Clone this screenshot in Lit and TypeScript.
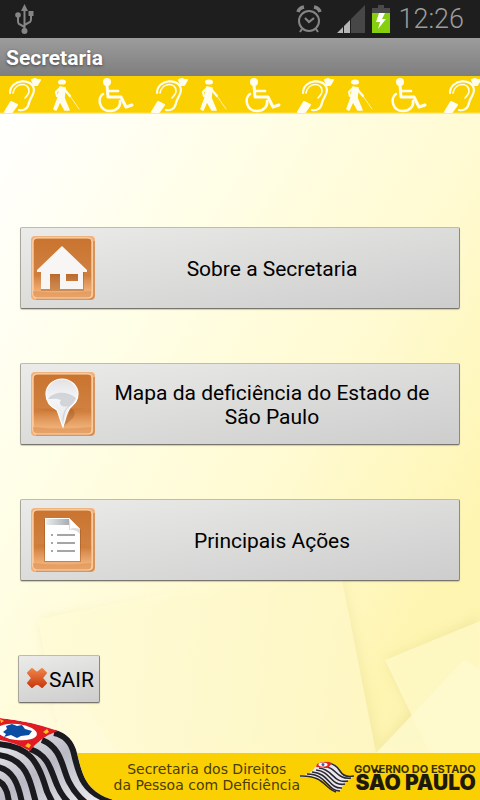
import { LitElement, html, svg, css } from "lit";
import { customElement } from "lit/decorators.js";

const tile = svg`
  <linearGradient id="tile" x1="0" y1="0" x2="0" y2="1">
    <stop offset="0" stop-color="#c9742f"/>
    <stop offset=".56" stop-color="#d08040"/>
    <stop offset=".62" stop-color="#c9722d"/>
    <stop offset="1" stop-color="#e89a58"/>
  </linearGradient>
  <linearGradient id="gloss" x1="0" y1="0" x2="0" y2="1">
    <stop offset="0" stop-color="#ffd2a4" stop-opacity=".05"/>
    <stop offset="1" stop-color="#ffd2a4" stop-opacity=".6"/>
  </linearGradient>
  <linearGradient id="pin" x1="0" y1="0" x2="0" y2="1">
    <stop offset="0" stop-color="#e2e2e4"/>
    <stop offset=".4" stop-color="#f6f6f8"/>
    <stop offset="1" stop-color="#e4e5e8"/>
  </linearGradient>
  <rect width="64" height="64" rx="4" fill="#f2b27c"/>
  <path d="M63 5V59Q63 63 59 63H5" fill="none" stroke="#d08a50" stroke-width="1.5"/>
  <rect x="2" y="2" width="59" height="60" rx="4" fill="url(#tile)" stroke="#ffdcb8" stroke-width="1.2"/>
  <path d="M2 37Q30 42 60 36V58Q60 61 57 61H5Q2 61 2 58Z" fill="url(#gloss)"/>
  <path d="M2 55Q30 58 60 55V58Q60 61 57 61H5Q2 61 2 58Z" fill="#d98a4a" opacity=".5"/>`;

const house = svg`${tile}
  <path d="M31 12L57 36H53V55H10V36H6Z" fill="#97501a" opacity=".35"/>
  <path fill-rule="evenodd" fill="#f7f6f4" d="M31 10L56 34V36H52V53H29V38H19V53H10V36H6V34ZM35 38V45H47V38Z"/>`;

const pin = svg`${tile}
  <path d="M31 56L42 46Q46 40 40 36Z" fill="#8f4a18" opacity=".3"/>
  <path d="M31 7C40 7 47 14 47 22C47 29 43 32 39 36C35 41 34 49 32 55C30 50 28 43 26 38C20 35 15 30 15 22C15 14 22 7 31 7Z" fill="url(#pin)" stroke="#fff" stroke-width="1.2"/>
  <path d="M17 27C22 20 35 18 45 26C43 32 38 34 35 38C33 42 33 46 32 50C31 44 33 38 37 34C31 36 27 32 30 28C25 26 21 27 17 27Z" fill="#bfc3ca" opacity=".65"/>`;

const sheet = svg`${tile}
  <linearGradient id="band" x1="0" x2="1"><stop offset="0" stop-color="#ececec"/><stop offset="1" stop-color="#a9abb0"/></linearGradient>
  <path d="M13 54H50V22L39 11H13Z" fill="#8f4a18" opacity=".4"/>
  <path d="M14 10H38L49 21V53H14Z" fill="#fefefe"/>
  <path d="M15 11H38V17H15Z" fill="url(#band)"/>
  <path d="M38 10L49 21V26Q44 21 38 22Z" fill="#dcdde0"/>
  <path d="M38 10L49 21Q43 19 39 21Q40 15 38 10Z" fill="#fff"/>
  <g stroke="#a5a5a5" stroke-width="2"><path d="M26 27H44M26 35H44M26 43H44M20 27H22M20 35H22M20 43H22"/></g>`;

const strip = (x: number) => svg`
  <g transform="translate(${x} 0)" fill="none" stroke="#fffdf0" stroke-width="2.2" stroke-linecap="round" stroke-linejoin="round">
    <path d="M10 17C10 3 33 1 34 14C34 19 30 22 29 27C28 33 23 35 19 34"/>
    <path d="M13 17C15 6 29 6 29 15C29 18 27 20 25 22" stroke-width="1.6"/>
    <path d="M32 4L35 3L37 4L40 4L37 9L34 9Z" fill="#fffdf0" stroke-width="2"/>
    <path d="M11 26L17 29L12 36H5Z" fill="#fffdf0" stroke-width="2"/>
    <ellipse cx="62" cy="6" rx="4" ry="2.6" fill="#fffdf0" stroke="none"/>
    <path d="M60 11L65 12L64 22L69 34H65L60 25L56 34L54 33L58 22Z" fill="#fffdf0" stroke-width="1.6"/>
    <path d="M60 12L56 16L57 20M64 13L70 20" stroke-width="2.2"/>
    <path d="M70 20L79 33" stroke-width=".7"/>
    <circle cx="107" cy="6" r="4" fill="#fffdf0" stroke="none"/>
    <path d="M107 9L108 21H121L126 31L132 29" stroke-width="3"/>
    <path d="M108 15H118" stroke-width="2.6"/>
    <path d="M103 18C97 22 99 35 110 35C117 35 121 30 120 25" stroke-width="2.6"/>
  </g>`;

@customElement("app-root")
export class AppRoot extends LitElement {
  static styles = css`
    :host {
      display: flex;
      flex-direction: column;
      min-height: 100vh;
      font-family: Roboto, sans-serif;
      color: #000;
      background: linear-gradient(122deg, #fffffc 10%, #fffee6 35%, #fffad0 60%, #fef5b2 82%, #fdf4ae 100%);
    }
    svg { display: block; flex: none; }
    .status {
      display: flex;
      align-items: center;
      height: 38px;
      padding: 0 16px 0 14px;
      background: #1e1e1e;
      color: #9c9c9c;
    }
    .usb { margin-right: auto; }
    .clock { font-size: 27px; font-weight: 300; line-height: 36px; margin-left: 8px; }
    .signal { margin-left: 15px; }
    .battery { margin-left: 7px; }
    .title {
      margin: 0;
      padding: 0 6px;
      font-size: 21px;
      font-weight: 700;
      line-height: 40px;
      height: 38px;
      color: #fff;
      background: linear-gradient(#9c9c9c, #7e7e7e);
      text-shadow: 0 1px 3px #444;
    }
    .strip { height: 38px; background: linear-gradient(#fbd000 36px, #fff6b0); }
    .strip svg { width: 100%; }
    .main {
      position: relative;
      flex: 1;
      display: flex;
      flex-direction: column;
      padding: 113px 20px 50px;
    }
    .papers { position: absolute; inset: 0; width: 100%; height: 100%; }
    .menu { position: relative; display: grid; gap: 54px; }
    .btn {
      display: flex;
      align-items: center;
      box-sizing: border-box;
      font-family: inherit;
      color: #000;
      border: 1px solid;
      border-color: #bcbcb0 #8d8b7c #77756c #a9a79c;
      border-radius: 2px;
      background: linear-gradient(170deg, #ebebe9, #cdcdcd);
      box-shadow: 0 1px 1px #8886;
      cursor: pointer;
    }
    .item { height: 82px; padding: 0 10px; font-size: 21px; line-height: 24px; }
    .label { flex: 1; padding-top: 2px; text-align: center; }
    .exit {
      position: relative;
      align-self: flex-start;
      margin: 74px 0 0 -2px;
      width: 82px;
      height: 48px;
      padding: 0 5px 0 8px;
      gap: 2px;
      font-size: 21px;
      line-height: 24px;
    }
    .exit .label { flex: none; }
    .footer {
      position: relative;
      display: flex;
      justify-content: flex-end;
      align-items: center;
      height: 47px;
      padding-right: 5px;
      background: #fbd003;
      color: #4a3d00;
    }
    .flag { position: absolute; left: 0; bottom: 0; }
    .dept {
      margin: 0;
      text-align: center;
      font: 14px/16px "DejaVu Sans", sans-serif;
      white-space: nowrap;
    }
    .gov { display: flex; align-items: center; }
    .names { display: grid; width: 121px; padding-top: 3px; justify-items: end; color: #1d1a0c; white-space: nowrap; }
    .small { font: 700 11px/10px Inter, sans-serif; color: #3a3000; }
    .big { font: 900 21px/18px Inter, sans-serif; }
  `;

  private item(icon: unknown, label: string) {
    return html`<button class="btn item" type="button">
      <svg width="64" height="64" viewBox="0 0 64 64" aria-hidden="true">${icon}</svg>
      <span class="label">${label}</span>
    </button>`;
  }

  render() {
    return html`
      <header>
        <div class="status">
          <svg class="usb" width="22" height="32" viewBox="0 0 22 32" fill="none" stroke="#858585" stroke-width="2">
            <path d="M10.5 6V28M10.5 24L5 21Q4 20 4 18V12M10.5 22L16 19Q17 18 17 16V11"/>
            <g fill="#858585" stroke="none"><path d="M10.5 1L14 8H7Z"/><circle cx="4" cy="12" r="2.8"/><path d="M14.5 8H19.5V13H14.5Z"/><circle cx="10.5" cy="28" r="3"/></g>
          </svg>
          <svg width="26" height="28" viewBox="0 0 26 28" fill="none" stroke="#858585" stroke-width="2">
            <circle cx="13" cy="16" r="10"/><path d="M9 13L13 17L18 13" stroke-width="2.2"/>
            <path d="M6 24L4 27M20 24L22 27"/><path d="M2 7Q3 3 8 2M24 7Q23 3 18 2" stroke-width="3.5"/>
          </svg>
          <svg class="signal" width="28" height="28" viewBox="0 0 28 28">
            <path d="M14 14L28 0V28H14Z" fill="#474747"/><path d="M0 28L6 22V28ZM7 21L13 15V28H7Z" fill="#b5b5b5"/>
          </svg>
          <svg class="battery" width="18" height="28" viewBox="0 0 18 28">
            <path d="M6 0H12V3H18V9H0V3H6Z" fill="#4a4a4a"/><path d="M0 8H18V28H0Z" fill="#86cf0e"/>
            <path d="M7 8L13 8L10 14L14 14L6 24L8 17L4 17Z" fill="#fff"/>
          </svg>
          <span class="clock">12:26</span>
        </div>
        <h1 class="title">Secretaria</h1>
        <div class="strip">
          <svg height="38" aria-hidden="true">
            <pattern id="access" width="293" height="38" patternUnits="userSpaceOnUse">${strip(0)}${strip(147)}</pattern>
            <rect width="100%" height="38" fill="url(#access)"/>
          </svg>
        </div>
      </header>
      <main class="main">
        <svg class="papers" viewBox="0 0 480 639" preserveAspectRatio="xMaxYMax slice" aria-hidden="true">
          <defs>
            <filter id="soft" x="-20%" y="-20%" width="140%" height="140%"><feGaussianBlur stdDeviation="6"/></filter>
            <linearGradient id="sheet1" x1="0" x2="1"><stop offset="0" stop-color="#fffcd8"/><stop offset="1" stop-color="#fff8c6"/></linearGradient>
          </defs>
          <path d="M40 505L342 460L380 639H62Z" fill="#cfc26e" opacity=".22" filter="url(#soft)"/>
          <path d="M38 505L338 445L376 639H62Z" fill="url(#sheet1)" opacity=".9"/>
          <path d="M385 546L480 503V639H376L410 596Z" fill="#cfc26e" opacity=".25" filter="url(#soft)"/>
          <path d="M385 546L480 507V639H430Z" fill="#fff9c8" opacity=".85"/>
          <path d="M376 639L464 546L480 556V639Z" fill="#fffacf" opacity=".85"/>
          <path d="M0 608L56 590L86 590L118 639H0Z" fill="#fffce0" opacity=".5"/>
        </svg>
        <nav class="menu">
          ${this.item(house, "Sobre a Secretaria")}
          ${this.item(pin, "Mapa da deficiência do Estado de São Paulo")}
          ${this.item(sheet, "Principais Ações")}
        </nav>
        <button class="btn exit" type="button">
          <svg width="20" height="24" viewBox="0 0 20 24" aria-hidden="true">
            <linearGradient id="cross" x1="0" y1="0" x2="0" y2="1"><stop offset="0" stop-color="#ee8348"/><stop offset="1" stop-color="#c93a10"/></linearGradient>
            <path d="M5 2L10 6L15 2L19 6L15 11L19 16L15 20L10 16L5 20L1 16L5 11L1 6Z" fill="url(#cross)" stroke="url(#cross)" stroke-width="2" stroke-linejoin="round"/>
          </svg>
          <span class="label">SAIR</span>
        </button>
      </main>
      <footer class="footer">
        <svg class="flag" width="115" height="84" viewBox="0 0 115 84" aria-hidden="true">
          <clipPath id="cloth"><path d="M0 2Q30 5 56 14Q72 19 77 36C82 56 84 76 114 84H0Z"/></clipPath>
          <linearGradient id="silver" x1="0" y1="0" x2="1" y2="1"><stop offset="0" stop-color="#fff"/><stop offset=".5" stop-color="#b9bac4"/><stop offset="1" stop-color="#f4f4f6"/></linearGradient>
          <g clip-path="url(#cloth)">
            <path d="M0 0H115V84H0Z" fill="url(#silver)"/>
            <g fill="none" stroke="#1b1a1e" stroke-width="6">
              <path d="M54 17Q70 20 74 38C79 60 84 78 112 85"/>
              <path d="M42 24C62 32 62 52 69 66Q75 78 86 87"/>
              <path d="M30 33C50 40 51 56 57 69Q61 79 69 87"/>
              <path d="M-2 28C30 30 38 48 44 66Q47 78 53 87"/>
              <path d="M-2 39C22 42 28 58 32 72L36 87"/>
              <path d="M-2 51C12 54 18 66 22 87"/>
              <path d="M-2 65C5 68 8 76 9 87"/>
            </g>
            <path d="M0 2Q30 5 58 15Q40 21 30 35Q14 26 0 24Z" fill="#e11b22"/>
            <ellipse cx="17" cy="16" rx="20" ry="8" transform="rotate(7 17 16)" fill="#fff"/>
            <path d="M3 16L7 13L6 10L12 8L17 10L22 9L25 13L32 15L29 19L21 20L17 22L11 19L4 21L6 18Z" fill="#0a4da3"/>
            <g fill="#f9c41c"><path d="M0 3L4 5L1 7ZM47 13L49 16L46 18L43 16ZM28 27L31 29L29 32L25 30Z"/></g>
          </g>
        </svg>
        <p class="dept">Secretaria dos Direitos<br>da Pessoa com Deficiência</p>
        <div class="gov">
          <svg width="54" height="34" viewBox="0 0 54 34" aria-hidden="true">
            <path d="M0 16Q12 14 16 6Q18 1 28 2Q36 3 40 11Q44 18 54 16Q44 22 40 31Q34 34 28 25Q22 16 0 17Z" fill="#eceaf0"/>
            <g fill="none" stroke="#2a2830" stroke-width="1.6">
              <path d="M28 3Q36 4 40 11Q44 18 54 16"/><path d="M24 7C36 6 36 20 51 18"/><path d="M19 8C33 9 33 24 48 21"/>
              <path d="M16 10C31 11 31 27 45 24"/><path d="M12 12C29 13 29 29 42 28"/><path d="M7 14C27 14 27 31 40 31"/><path d="M0 16C24 15 25 29 36 32"/>
            </g>
            <path d="M17 4Q24 0 32 3L28 8L16 7Z" fill="#dd2a22"/><ellipse cx="23" cy="4.5" rx="4.5" ry="2" fill="#fff"/><circle cx="23" cy="4.5" r="1.5" fill="#3464ad"/>
          </svg>
          <div class="names"><span class="small">GOVERNO DO ESTADO</span><span class="big">SÃO PAULO</span></div>
        </div>
      </footer>
    `;
  }
}
